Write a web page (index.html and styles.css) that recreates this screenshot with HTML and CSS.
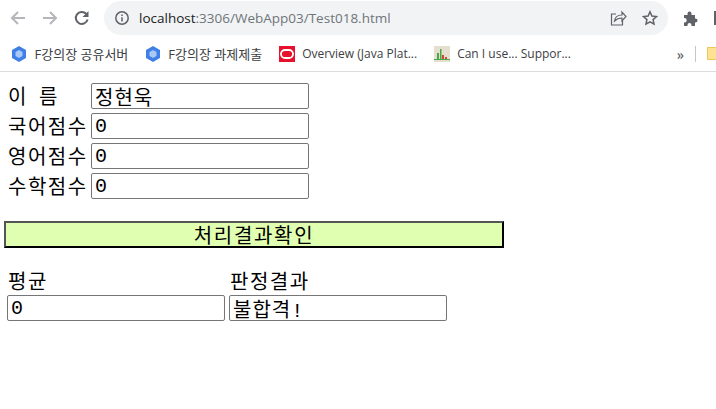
FILE: index.html
```html
<!DOCTYPE html>
<html lang="ko">
<head>
    <meta charset="UTF-8">
    <title>Test018</title>
    <link rel="stylesheet" href="styles.css">
</head>
<body>
    <div class="toolbar">
        <svg class="nav-icon" width="18" height="18" viewBox="0 0 18 18"><path d="M16 9H3M9 3L3 9l6 6" fill="none" stroke="#b4b6b9" stroke-width="2"/></svg>
        <svg class="nav-icon" width="18" height="18" viewBox="0 0 18 18"><path d="M2 9h13M9 3l6 6-6 6" fill="none" stroke="#b4b6b9" stroke-width="2"/></svg>
        <svg class="nav-icon" width="18" height="18" viewBox="0 0 18 18"><path d="M14.6 10.5A6 6 0 1 1 13.2 4.8" fill="none" stroke="#5f6368" stroke-width="2"/><path d="M15.5 2v6h-6z" fill="#5f6368"/></svg>
        <div class="address">
            <svg width="16" height="16" viewBox="0 0 16 16"><circle cx="8" cy="8" r="6.2" fill="none" stroke="#5f6368" stroke-width="1.5"/><path d="M8 7.2v4.2M8 4.4v1.6" stroke="#5f6368" stroke-width="1.5"/></svg>
            <span class="url"><span class="host">localhost</span>:3306/WebApp03/Test018.html</span>
            <svg class="share" width="18" height="18" viewBox="0 0 18 18"><path d="M7 5H2.500v11h11v-4" fill="none" stroke="#5f6368" stroke-width="1.200"/><path d="M5.500 12c.5-4 3.500-6 7.500-6V3l4 4.500-4 4.500V9c-3 0-5.500 1-7.500 3z" fill="none" stroke="#5f6368" stroke-width="1.200"/></svg>
            <svg class="star" width="16" height="16" viewBox="0 0 16 16"><path d="M8 1.800l1.900 4.200 4.600.5-3.400 3.100.9 4.500L8 11.800l-4 2.300.9-4.500L1.500 6.500l4.600-.5z" fill="none" stroke="#5f6368" stroke-width="1.500"/></svg>
        </div>
        <svg class="puzzle" width="16" height="16" viewBox="0 0 16 16"><path d="M1 5h3.500V3.500a2 2 0 0 1 4 0V5H12v3.500h.5a2 2 0 0 1 0 4H12V16H8.500v-1a2 2 0 0 0-4 0v1H1v-3.500h.5a2.200 2.200 0 0 0 0-4.400H1z" fill="#5f6368"/></svg>
        <div class="bar-edge"></div>
    </div>
    <div class="bookmarks">
        <div class="bookmark">
            <svg width="16" height="16" viewBox="0 0 16 16"><path d="M8 0l7 4v8l-7 4-7-4V4z" fill="#3f7fe8"/><path d="M8 4l3.500 2v4L8 12l-3.500-2V6z" fill="#a9c8f5"/></svg>
            <span class="ko-title">F강의장 공유서버</span>
        </div>
        <div class="bookmark">
            <svg width="16" height="16" viewBox="0 0 16 16"><path d="M8 0l7 4v8l-7 4-7-4V4z" fill="#3f7fe8"/><path d="M8 4l3.500 2v4L8 12l-3.500-2V6z" fill="#a9c8f5"/></svg>
            <span class="ko-title">F강의장 과제제출</span>
        </div>
        <div class="bookmark">
            <svg width="16" height="16" viewBox="0 0 16 16"><rect width="16" height="16" fill="#e8112d"/><rect x="2" y="4" width="12" height="8" rx="4" fill="none" stroke="#fff" stroke-width="1.800"/></svg>
            <span>Overview (Java Plat...</span>
        </div>
        <div class="bookmark">
            <svg width="16" height="16" viewBox="0 0 16 16"><rect width="16" height="16" fill="#e6dfcf"/><path d="M0 13h16v1H0z" fill="#46a846"/><path d="M3 7h2v6H3zM6 3h1.500v10H6z" fill="#46a846"/><path d="M8 9h2v4H8zM11 11h2v2h-2z" fill="#c9483c"/></svg>
            <span>Can I use... Suppor...</span>
        </div>
        <span class="more">»</span>
        <div class="bar-divider"></div>
        <div class="folder"></div>
    </div>

    <div class="content">
        <div class="field-row">
            <label class="field-label name-label"><span>이</span><span>름</span></label>
            <input class="text-input" type="text" value="정현욱">
        </div>
        <div class="field-row">
            <label class="field-label">국어점수</label>
            <input class="text-input" type="text" value="0">
        </div>
        <div class="field-row">
            <label class="field-label">영어점수</label>
            <input class="text-input" type="text" value="0">
        </div>
        <div class="field-row">
            <label class="field-label">수학점수</label>
            <input class="text-input" type="text" value="0">
        </div>

        <button class="btn" type="button">처리결과확인</button>

        <div class="result">
            <div class="result-col">
                <label class="field-label">평균</label>
                <input class="text-input" type="text" value="0">
            </div>
            <div class="result-col">
                <label class="field-label">판정결과</label>
                <input class="text-input" type="text" value="불합격!">
            </div>
        </div>
    </div>
</body>
</html>
```

FILE: styles.css
```css
body {
    margin: 0;
    font-family: "Noto Sans CJK KR", sans-serif;
    background-color: #fff;
    color: #000;
    overflow: hidden;
}

.toolbar {
    display: flex;
    align-items: center;
    height: 36px;
    padding-left: 9px;
}

.nav-icon {
    margin-right: 14px;
    flex: none;
}

.nav-icon + .nav-icon + .nav-icon {
    margin-right: 13px;
}

.address {
    display: flex;
    align-items: center;
    width: 564px;
    height: 34px;
    padding: 0 10px;
    box-sizing: border-box;
    background-color: #f1f3f4;
    border-radius: 17px;
    flex: none;
}

.url {
    margin-left: 9px;
    font-family: "Open Sans", sans-serif;
    font-size: 13.5px;
    color: #70757a;
    white-space: nowrap;
    flex: 1;
}

.host {
    color: #202124;
}

.share {
    margin-right: 15px;
}

.puzzle {
    margin-left: 15px;
    flex: none;
}

.bar-edge {
    width: 2px;
    height: 14px;
    margin-left: 15px;
    background-color: #5f6368;
    flex: none;
}

.bookmarks {
    display: flex;
    align-items: center;
    height: 35px;
    padding-left: 11px;
    border-bottom: 1px solid #dadce0;
}

.bookmark {
    display: flex;
    align-items: center;
    gap: 7.5px;
    margin-right: 16.5px;
    font-family: "Open Sans", "Noto Sans CJK KR", sans-serif;
    font-size: 12px;
    line-height: 14px;
    color: #3c4043;
    white-space: nowrap;
}

.ko-title {
    font-size: 13px;
}

.more {
    margin-left: auto;
    font-size: 14px;
    font-weight: bold;
    color: #5f6368;
}

.bar-divider {
    width: 1px;
    height: 16px;
    margin-left: 11px;
    background-color: #c4c7c5;
}

.folder {
    width: 16px;
    height: 13px;
    margin-left: 11px;
    margin-right: -7px;
    background-color: #fde293;
    border: 1px solid #f0c75e;
    box-sizing: border-box;
    flex: none;
}

.content {
    padding: 11px 0 0 8px;
}

.field-row {
    display: flex;
    align-items: center;
    height: 26px;
    margin-bottom: 4px;
}

.field-label {
    display: block;
    width: 83px;
    font-size: 20px;
    line-height: 26px;
    letter-spacing: 1.5px;
    white-space: nowrap;
    flex: none;
}

.name-label span + span {
    margin-left: 11px;
}

.text-input {
    width: 218px;
    height: 26px;
    padding: 1px 3px;
    box-sizing: border-box;
    border: 1px solid #767676;
    border-radius: 2px;
    font-family: "Liberation Mono", "Noto Sans CJK KR", monospace;
    font-size: 20px;
    letter-spacing: 1px;
    color: #000;
    background-color: #fff;
}

.btn {
    display: block;
    width: 500px;
    height: 27px;
    margin: 22px 0 0 -4px;
    padding: 0;
    box-sizing: border-box;
    border: 2px solid;
    border-color: #555 #000 #000 #555;
    background-color: #e0ffb0;
    font-family: "Noto Sans CJK KR", sans-serif;
    font-size: 20px;
    line-height: 22px;
    letter-spacing: 1.7px;
    color: #000;
}

.result {
    display: flex;
    gap: 4px;
    margin: 19px 0 0 -1px;
}

.result-col {
    display: flex;
    flex-direction: column;
    width: 218px;
}

.result-col .field-label {
    margin-left: 1px;
    line-height: 28px;
}
```
